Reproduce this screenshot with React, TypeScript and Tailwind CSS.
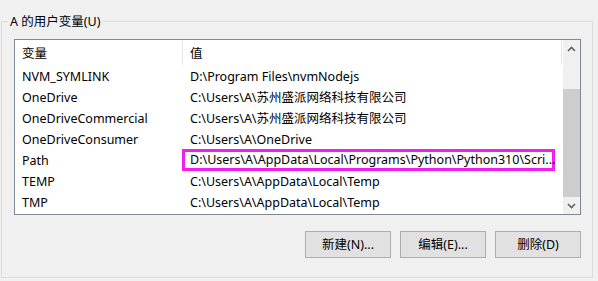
import React from 'react';

const rows: { name: string; value: string; marked?: boolean }[] = [
  { name: 'NVM_SYMLINK', value: 'D:\\Program Files\\nvmNodejs' },
  { name: 'OneDrive', value: 'C:\\Users\\A\\苏州盛派网络科技有限公司' },
  { name: 'OneDriveCommercial', value: 'C:\\Users\\A\\苏州盛派网络科技有限公司' },
  { name: 'OneDriveConsumer', value: 'C:\\Users\\A\\OneDrive' },
  { name: 'Path', value: 'D:\\Users\\A\\AppData\\Local\\Programs\\Python\\Python310\\Scri...', marked: true },
  { name: 'TEMP', value: 'C:\\Users\\A\\AppData\\Local\\Temp' },
  { name: 'TMP', value: 'C:\\Users\\A\\AppData\\Local\\Temp' },
];

const Chevron = ({ up }: { up?: boolean }) => (
  <svg width="9" height="6" viewBox="0 0 9 6" className={up ? '' : 'rotate-180'}>
    <path d="M1 5 L4.5 1.5 L8 5" fill="none" stroke="#606060" strokeWidth="1.6" />
  </svg>
);

const WinButton = ({ label }: { label: string }) => (
  <button className="w-[86px] h-[27px] pt-[2px] bg-[#e1e1e1] border border-[#adadad] text-[12.5px] text-black flex items-center justify-center">
    {label}
  </button>
);

export default function App() {
  return (
    <div
      className="w-[598px] h-[281px] bg-[#f0f0f0] overflow-hidden text-[12.5px] text-black"
      style={{ fontFamily: '"Segoe UI", "Noto Sans", "Noto Sans CJK SC", sans-serif' }}
    >
      <fieldset className="ml-[1px] mt-[11px] w-[592px] h-[267px] border border-[#dcdcdc]">
        <legend className="ml-[6px] px-[2px] pt-[2px] leading-[18px]">A 的用户变量(U)</legend>

        {/* list view */}
        <div className="ml-[12px] mt-[8px] w-[567px] h-[176px] border border-[#828790] bg-white flex">
          <div className="flex-1 flex flex-col">
            <div className="h-[25px] flex items-center">
              <div className="w-[168px] h-full pl-[7px] pt-[3px] flex items-center border-r border-[#e5e5e5]">变量</div>
              <div className="w-[379px] h-full pl-[7px] pt-[3px] flex items-center border-r border-[#e5e5e5]">值</div>
            </div>
            {rows.map((r) => (
              <div key={r.name} className="h-[21px] flex items-center whitespace-nowrap">
                <div className="w-[168px] pl-[7px] pt-[4px]">{r.name}</div>
                {r.marked ? (
                  <div className="ml-[-1px] w-[373px] h-[22px] border-[3px] border-[#f01ef0] pl-[5px] pt-[2px] flex items-center">
                    {r.value}
                  </div>
                ) : (
                  <div className="pl-[7px] pt-[4px]">{r.value}</div>
                )}
              </div>
            ))}
          </div>

          {/* scrollbar */}
          <div className="w-[17px] bg-[#f0f0f0] flex flex-col">
            <div className="h-[17px] flex items-center justify-center">
              <Chevron up />
            </div>
            <div className="flex-1 flex flex-col">
              <div className="h-[32px]" />
              <div className="flex-1 bg-[#cdcdcd]" />
            </div>
            <div className="h-[17px] flex items-center justify-center">
              <Chevron />
            </div>
          </div>
        </div>

        <div className="mt-[16px] w-[579px] flex justify-end gap-[9px]">
          <WinButton label="新建(N)..." />
          <WinButton label="编辑(E)..." />
          <WinButton label="删除(D)" />
        </div>
      </fieldset>
    </div>
  );
}
